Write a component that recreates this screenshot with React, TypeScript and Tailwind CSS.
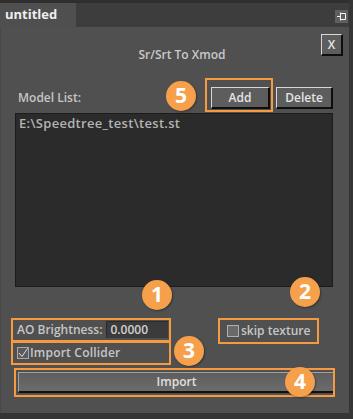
import React from "react";

const font = { fontFamily: '"Open Sans", "Noto Sans", sans-serif' };

function Badge({ n, x, y }: { n: number; x: number; y: number }) {
  return (
    <div
      className="absolute w-[30px] h-[30px] rounded-full bg-[#f6a04c] text-white flex items-center justify-center text-[21px] font-bold shadow-[1px_1px_2px_rgba(0,0,0,0.35)]"
      style={{ left: x - 15, top: y - 15 }}
    >
      {n}
    </div>
  );
}

function Box({ l, t, r, b }: { l: number; t: number; r: number; b: number }) {
  return (
    <div
      className="absolute border-2 border-[#f59a40] pointer-events-none"
      style={{ left: l, top: t, width: r - l, height: b - t }}
    />
  );
}

const bevel =
  "bg-[#5d5d5d] border-t border-l border-t-[#d8d8d8] border-l-[#d8d8d8] border-b-2 border-r-2 border-b-[#0e0e0e] border-r-[#0e0e0e] text-[#e4e4e4] text-[12px] font-semibold flex items-center justify-center";

export default function App() {
  return (
    <div className="w-[353px] h-[419px] bg-[#353535] flex flex-col relative overflow-hidden" style={font}>
      <div className="h-[3px] bg-[#2f2f2f]" />
      <div className="h-[24px] flex bg-[#3d3d3d] mr-[4px]">
        <div className="w-[76px] bg-[#4f4f4f] text-[#eeeeee] text-[13px] font-bold pl-[5px] leading-[22px]">
          untitled
        </div>
        <div className="flex-1" />
        <div className="w-[13px] h-[13px] mt-[7px] mr-[1px] bg-[#5f5f5f] flex items-center justify-center">
          <svg width="11" height="11" viewBox="0 0 11 11" fill="none" stroke="#f2f2f2" strokeWidth="1">
            <path d="M1 5.5H4.5M4.5 1.5V9.5M4.5 2.5H9.5V8.5H4.5" />
          </svg>
        </div>
      </div>
      <div className="flex-1 mr-[4px] mb-[6px] bg-[#505050] border-l border-l-[#474747] flex flex-col pl-[14px] pr-[16px]">
        <div className="flex items-start mt-[7px] h-[45px]">
          <div className="flex-1 text-center pl-[28px] pt-[13px] text-[12px] font-semibold text-[#c9c9c9] leading-[16px]">
            Sr/Srt To Xmod
          </div>
          <button className={`${bevel} w-[22px] h-[22px] -mr-[10px]`}>X</button>
        </div>
        <div className="flex items-center h-[22px] mt-[8px]">
          <div className="flex-1 pl-[3px] text-[12px] font-semibold text-[#c6c6c6]">Model List:</div>
          <button className={`${bevel} w-[59px] h-[22px]`}>Add</button>
          <button className={`${bevel} w-[57px] h-[22px] ml-[6px]`}>Delete</button>
        </div>
        <div className="mt-[4px] h-[174px] bg-[#2b2b2b] border border-[#1c1c1c] pl-[3px] text-[13px] tracking-[0.3px] font-semibold text-[#b3b3b3] leading-[16px] pt-[1px]">
          E:\Speedtree_test\test.st
        </div>
        <div className="flex mt-[31px]">
          <div className="flex flex-col w-[160px] -ml-[3px]">
            <div className="h-[23px] flex items-center pl-[5px] gap-[4px]">
              <span className="text-[12px] font-semibold text-[#c6c6c6]">AO Brightness:</span>
              <div className="w-[62px] h-[17px] bg-[#3b3b3b] border-t border-l border-[#2a2a2a] text-[12px] font-semibold text-[#d0d0d0] leading-[16px] pl-[3px]">
                0.0000
              </div>
            </div>
            <div className="h-[23px] flex items-center pl-[5px] gap-[1px]">
              <div className="w-[12px] h-[12px] bg-[#5a5a5a] border border-[#a8a8a8] flex items-center justify-center">
                <svg width="10" height="10" viewBox="0 0 10 10" fill="none" stroke="#e0e0e0" strokeWidth="1">
                  <path d="M1 5L4 8.5L9.5 0.5" />
                </svg>
              </div>
              <span className="text-[12px] font-semibold text-[#c6c6c6] tracking-[0.2px]">Import Collider</span>
            </div>
          </div>
          <div className="flex-1" />
          <div className="w-[99px] h-[25px] flex items-center pl-[8px] gap-[2px] mr-[15px]">
            <div className="w-[12px] h-[12px] bg-[#6a6a6a] border border-[#b0b0b0]" />
            <span className="text-[12px] font-semibold text-[#c6c6c6]">skip texture</span>
          </div>
        </div>
        <button className="mt-[8px] ml-[3px] -mr-[2px] h-[21px] bg-gradient-to-b from-[#5e5e5e] to-[#6b6b6b] border-t border-l border-t-[#a0a0a0] border-l-[#a0a0a0] border-b-2 border-r border-b-[#111] border-r-[#222] text-[12px] font-semibold text-[#e0e0e0] flex items-center justify-center">
          Import
        </button>
      </div>
      <div className="absolute right-0 top-0 bottom-0 w-[4px] bg-[#353535]" />

      <Box l={205} t={78} r={273} b={112} />
      <Box l={11} t={318} r={171} b={342} />
      <Box l={11} t={341} r={171} b={365} />
      <Box l={218} t={318} r={319} b={344} />
      <Box l={14} t={368} r={335} b={397} />

      <Badge n={5} x={181} y={96} />
      <Badge n={1} x={157} y={295} />
      <Badge n={2} x={305} y={292} />
      <Badge n={3} x={189} y={351} />
      <Badge n={4} x={300} y={382} />
    </div>
  );
}
